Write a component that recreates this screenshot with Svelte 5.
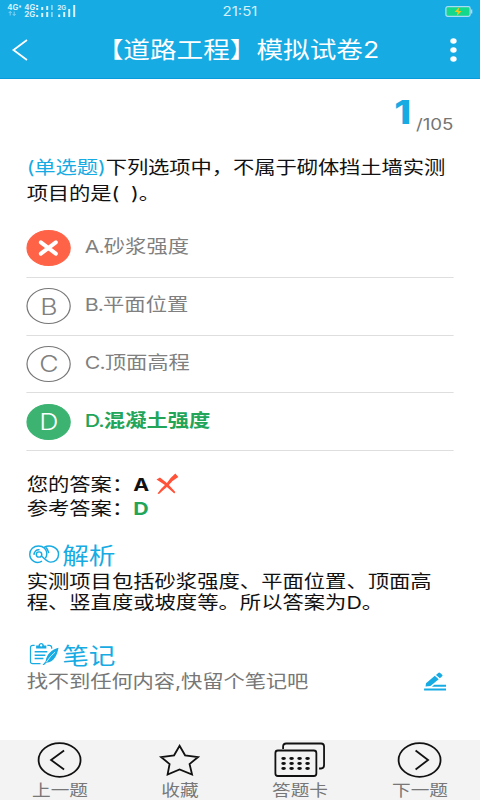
<script lang="ts">
  type OptionState = 'idle' | 'wrong' | 'right';

  interface Option {
    key: string;
    text: string;
    state: OptionState;
  }

  const title = '【道路工程】模拟试卷2';
  const current = 1;
  const total = 105;

  const options: Option[] = [
    { key: 'A', text: '砂浆强度', state: 'wrong' },
    { key: 'B', text: '平面位置', state: 'idle' },
    { key: 'C', text: '顶面高程', state: 'idle' },
    { key: 'D', text: '混凝土强度', state: 'right' },
  ];

  const tabs = [
    { icon: 'prev', label: '上一题' },
    { icon: 'star', label: '收藏' },
    { icon: 'card', label: '答题卡' },
    { icon: 'next', label: '下一题' },
  ];

  const cardDots = [0, 1, 2].flatMap((r) => [0, 1, 2, 3].map((c) => ({ x: 10 + c * 8, y: 16.5 + r * 5 })));
</script>

<div class="screen">
  <header>
    <div class="status">
      <svg class="signal" viewBox="0 0 72 14" preserveAspectRatio="none">
        <g class="net">
          <text x="0" y="6" textLength="11" lengthAdjust="spacingAndGlyphs">4G</text>
          <text x="17" y="6" textLength="11" lengthAdjust="spacingAndGlyphs">4G</text>
          <text x="17" y="12.6" textLength="11" lengthAdjust="spacingAndGlyphs">2G</text>
          <text x="50" y="5.5" textLength="9" lengthAdjust="spacingAndGlyphs" class="tiny">2G</text>
        </g>
        <path class="faint" d="M3 7.500v4M1.500 9 3 7.500l1.500 1.500M7 7.500v4M5.500 10 7 11.500l1.500-1.500" />
        <path
          d="M12 1.500h2v2h-2zM29 1h2v2h-2zM29 4h2v2h-2zM29 11h2v2h-2zM34 3h2v3h-2zM34 9h2v4h-2zM39 2h2v4h-2zM39 8h2v5h-2zM51 10.500h2v2.500h-2zM56 8h2v5h-2zM61 5h2v8h-2zM66 1h2v12h-2z"
        />
        <path d="M44 1h1.500v5H44zM44 8h1.500v5H44z" opacity=".7" />
      </svg>
      <span class="time">21:51</span>
      <svg class="battery" viewBox="0 0 28 11" preserveAspectRatio="none">
        <rect x=".7" y=".7" width="24.600" height="9.600" rx="1.800" fill="#14d98c" stroke="#a9dcf5" stroke-width="1.300" />
        <path d="M26 3.500h1.500v4H26z" fill="#a9dcf5" />
        <path d="M14.500 1 9.500 6h3.200l-1 4 5-5h-3.200z" fill="#f0c419" />
      </svg>
    </div>
    <nav>
      <svg class="back" viewBox="0 0 16 22" preserveAspectRatio="none">
        <path d="M15 1 1.500 11 15 21" />
      </svg>
      <h1>{title}</h1>
      <svg class="more" viewBox="0 0 7 24" preserveAspectRatio="none">
        <ellipse cx="3.500" cy="3" rx="3.200" ry="2.700" />
        <ellipse cx="3.500" cy="12" rx="3.200" ry="2.700" />
        <ellipse cx="3.500" cy="21" rx="3.200" ry="2.700" />
      </svg>
    </nav>
  </header>

  <main>
    <div class="counter">
      <b>{current}</b><span>/{total}</span>
    </div>

    <p class="question"><span class="kind">(单选题)</span>下列选项中，不属于砌体挡土墙实测项目的是(&nbsp;&nbsp;)。</p>

    <ul class="options">
      {#each options as option}
        <li class={option.state}>
          <span class="badge">
            {#if option.state === 'wrong'}
              <svg viewBox="0 0 20 16" preserveAspectRatio="none">
                <path d="M2.500 2.300 17.500 13.700M17.500 2.300 2.500 13.700" />
              </svg>
            {:else}
              {option.key}
            {/if}
          </span>
          <span class="option-text"><span class="key">{option.key}.</span>{option.text}</span>
        </li>
      {/each}
    </ul>

    <div class="answers">
      <div>
        您的答案：<b>A</b>
        <svg class="cross" viewBox="0 0 23 22" preserveAspectRatio="none">
          <path d="M.5 6.500 4 4.500 11 10Q14.500 4.500 19.500.5L22.500 4Q17 7 13 12L19.500 19 18.500 20.500 11 14Q5.500 18.500 3 21L1.500 20.500Q5 15.500 9 12Z" />
        </svg>
      </div>
      <div>参考答案：<b class="ok">D</b></div>
    </div>

    <section>
      <h2>
        <svg class="analysis" viewBox="0 0 32 20" preserveAspectRatio="none">
          <path d="M13.500 17C8 20.500 1 16.500 1 9.700 1 4.500 5 1 10 1c5 0 8.500 3.500 8.500 8 0 2-.5 3.500-1.500 5" />
          <path d="M15.500 2.500C22-1 30.500 2.500 30.500 9.700c0 5-3.500 8.300-8 8.300-4 0-6-3.500-9.500-6.500M17.500 2.500c1.500 1.500 2.500 3.500 3 6" />
          <circle cx="10.500" cy="10" r="2.800" />
          <path d="M5.500 10.500C5 7 8 4.500 11 5" />
        </svg>
        解析
      </h2>
      <p>实测项目包括砂浆强度、平面位置、顶面高程、竖直度或坡度等。所以答案为D。</p>
    </section>

    <section class="notes">
      <h2>
        <svg class="note" viewBox="0 0 32 24" preserveAspectRatio="none">
          <path class="sheet" d="M6 2.500H4Q1.700 2.500 1.700 5v14.500q0 2 2.300 2h8M19 2.500h2q2.500 0 2.500 2.500v1" />
          <path d="M6 9.200h13M6 12.700h11M6 16.200h9" />
          <path class="solid" d="M7.500 2.500h2.500c0-3.500 5.500-3.500 5.500 0H18v3.300H7.500z" />
          <path class="solid" d="M30.500 5C24 6.500 18 12 17.300 19l-3.300 4h1.600l2.400-2.500c8-.5 11-7.500 12.500-15.500z" />
          <path class="vein" d="M18 20Q22 13.500 27 9.500" />
          <circle cx="12.700" cy="2.500" r="1.200" fill="#fff" stroke="none" />
        </svg>
        笔记
      </h2>
      <div class="note-row">
        <span>找不到任何内容,快留个笔记吧</span>
        <svg class="edit" viewBox="0 0 24 19" preserveAspectRatio="none">
          <path d="M2.500 11.200 11.500 3.800 15.500 7.200 7 14 2 14.500z" />
          <path d="M12.700 2.900 15 1q1-.8 2 0l2 1.700q1 .8 0 1.600L16.700 6.200z" />
          <path d="M11 12.800H23v1.900H8.500zM.5 16.600H23v2H.5z" />
        </svg>
      </div>
    </section>
  </main>

  <footer>
    {#each tabs as tab}
      <button type="button">
        <svg viewBox="0 0 52 36" preserveAspectRatio="none">
          {#if tab.icon === 'prev'}
            <ellipse cx="26" cy="18" rx="21" ry="16.800" />
            <path d="M30.500 8.500 17.500 18l13 9.500" />
          {:else if tab.icon === 'next'}
            <ellipse cx="26" cy="18" rx="21" ry="16.800" />
            <path d="M22 8.500 34.500 18 22 27.500" />
          {:else if tab.icon === 'star'}
            <path d="M26 3.800 31.500 13.300 44.500 15 36 22 38.500 32.600 26 27.500 14 32.600 16 22 7.500 15 20.500 13.300Z" />
          {:else}
            <path d="M9.500 7V4.500Q9.500 1.500 12.500 1.500h35q3 0 3 3V23q0 3.500-3 3.500h-2" />
            <rect x="1.800" y="8.500" width="41" height="25.500" rx="2.500" />
            {#each cardDots as dot}
              <ellipse class="dot" cx={dot.x} cy={dot.y} rx="2.300" ry="1.400" />
            {/each}
          {/if}
        </svg>
        <span>{tab.label}</span>
      </button>
    {/each}
  </footer>
</div>

<style>
  :global(body) {
    overflow: hidden;
    background: #fff;
  }

  /* Laid out 400px wide, then stretched to the 480px viewport. */
  .screen {
    display: flex;
    flex-direction: column;
    width: 400px;
    height: 800px;
    transform: scaleX(1.2);
    transform-origin: 0 0;
    font-family: Inter, 'Noto Sans CJK SC', sans-serif;
    font-size: 17.78px;
    color: #111;
    background: #fff;
    overflow: hidden;
  }

  svg {
    display: block;
    flex-shrink: 0;
    overflow: visible;
  }

  h1,
  h2,
  p,
  ul {
    margin: 0;
    padding: 0;
    font-weight: 400;
  }

  header {
    box-sizing: border-box;
    height: 79px;
    flex-shrink: 0;
    color: #fff;
    background: #17abe3;
    border-bottom: 1px solid #079bdc;
  }

  .status {
    display: grid;
    grid-template-columns: 1fr auto 1fr;
    align-items: center;
    height: 20px;
    padding: 0 6px;
  }

  .signal {
    width: 60px;
    height: 14px;
    fill: #d8f1fc;
  }

  .net {
    font-size: 7px;
    font-weight: 700;
  }

  .tiny {
    font-size: 6px;
  }

  .faint {
    fill: none;
    stroke: #9edaf4;
    stroke-width: 0.8;
  }

  .time {
    padding-top: 2px;
    font-size: 12.5px;
    line-height: 20px;
    color: #d4f0fb;
  }

  .battery {
    justify-self: end;
    width: 23px;
    height: 11px;
  }

  nav {
    display: flex;
    align-items: center;
    justify-content: space-between;
    height: 58px;
    padding: 1px 19px 0 10px;
  }

  .back {
    width: 13.3px;
    height: 22px;
    fill: none;
    stroke: #fff;
    stroke-width: 1.8;
  }

  h1 {
    padding-right: 2px;
    font-size: 22.2px;
    line-height: 30px;
    white-space: nowrap;
  }

  .more {
    width: 5.8px;
    height: 24px;
    fill: #fff;
  }

  main {
    flex: 1;
    min-height: 0;
    padding: 0 22.2px;
  }

  .counter {
    display: flex;
    justify-content: flex-end;
    height: 76px;
    line-height: 40px;
  }

  .counter b {
    padding: 14px 4px 0 0;
    font-size: 32px;
    font-weight: 800;
    color: #17abe3;
  }

  .counter span {
    padding-top: 26px;
    font-size: 15.56px;
    color: #757575;
  }

  .question {
    line-height: 26px;
    letter-spacing: -0.08px;
  }

  .kind {
    color: #17abe3;
  }

  .options {
    margin-top: 13px;
    list-style: none;
  }

  .options li {
    box-sizing: border-box;
    display: flex;
    align-items: center;
    gap: 11.5px;
    height: 57.75px;
    color: #808080;
    border-bottom: 1px solid #dedede;
  }

  .badge {
    box-sizing: border-box;
    display: flex;
    align-items: center;
    justify-content: center;
    width: 37px;
    height: 36px;
    border: 1px solid #777;
    border-radius: 50%;
    font-size: 22.2px;
    font-weight: 300;
  }

  .badge svg {
    width: 16.6px;
    height: 16px;
    fill: none;
    stroke: #fff;
    stroke-width: 4;
    stroke-linecap: round;
  }

  .option-text {
    padding-bottom: 2px;
    line-height: 24px;
  }

  .key {
    letter-spacing: -0.8px;
  }

  .wrong .badge {
    background: #ff6347;
    border-color: #ff6347;
  }

  .right .badge {
    color: #fff;
    background: #3cb371;
    border-color: #3cb371;
  }

  .right .option-text {
    font-weight: 600;
    color: #22a559;
  }

  .right .key {
    font-weight: 500;
  }

  .answers {
    margin-top: 22px;
    line-height: 24px;
  }

  .answers div {
    display: flex;
    align-items: center;
    height: 24px;
  }

  .answers b {
    font-weight: 700;
  }

  .answers .ok {
    color: #22a559;
  }

  .cross {
    width: 19px;
    height: 22px;
    margin: -2px 0 0 6px;
    fill: #ff5238;
  }

  section {
    margin-top: 20px;
    line-height: 21px;
  }

  section p {
    padding-top: 1px;
  }

  h2 {
    display: flex;
    align-items: center;
    gap: 2.2px;
    height: 29px;
    padding-left: 1.5px;
    font-size: 22.2px;
    color: #17abe3;
  }

  h2 svg {
    width: 26px;
    fill: none;
    stroke: #17abe3;
    stroke-width: 1.5;
  }

  .analysis {
    height: 19px;
    margin-top: -2px;
  }

  .note {
    height: 23px;
    margin-top: -3px;
  }

  .solid {
    fill: #17abe3;
    stroke: none;
  }

  .sheet {
    stroke-width: 1.2;
  }

  .vein {
    stroke: #fff;
    stroke-width: 0.8;
  }

  .notes {
    margin-top: 28px;
  }

  .note-row {
    display: flex;
    align-items: center;
    justify-content: space-between;
    padding: 1px 5px 0 0;
    color: #777;
    letter-spacing: -0.1px;
  }

  .edit {
    width: 19.5px;
    height: 19px;
    fill: #17abe3;
  }

  footer {
    display: flex;
    height: 60px;
    flex-shrink: 0;
    background: #f3f3f3;
  }

  button {
    display: flex;
    flex: 1;
    flex-direction: column;
    align-items: center;
    gap: 1px;
    padding: 2px 0 0;
    border: 0;
    background: none;
    font: inherit;
    font-size: 15.56px;
    line-height: 24px;
    color: #777;
  }

  button svg {
    width: 43.3px;
    height: 36px;
    fill: none;
    stroke: #111;
    stroke-width: 1.8;
  }

  .dot {
    fill: #111;
    stroke: none;
  }
</style>
